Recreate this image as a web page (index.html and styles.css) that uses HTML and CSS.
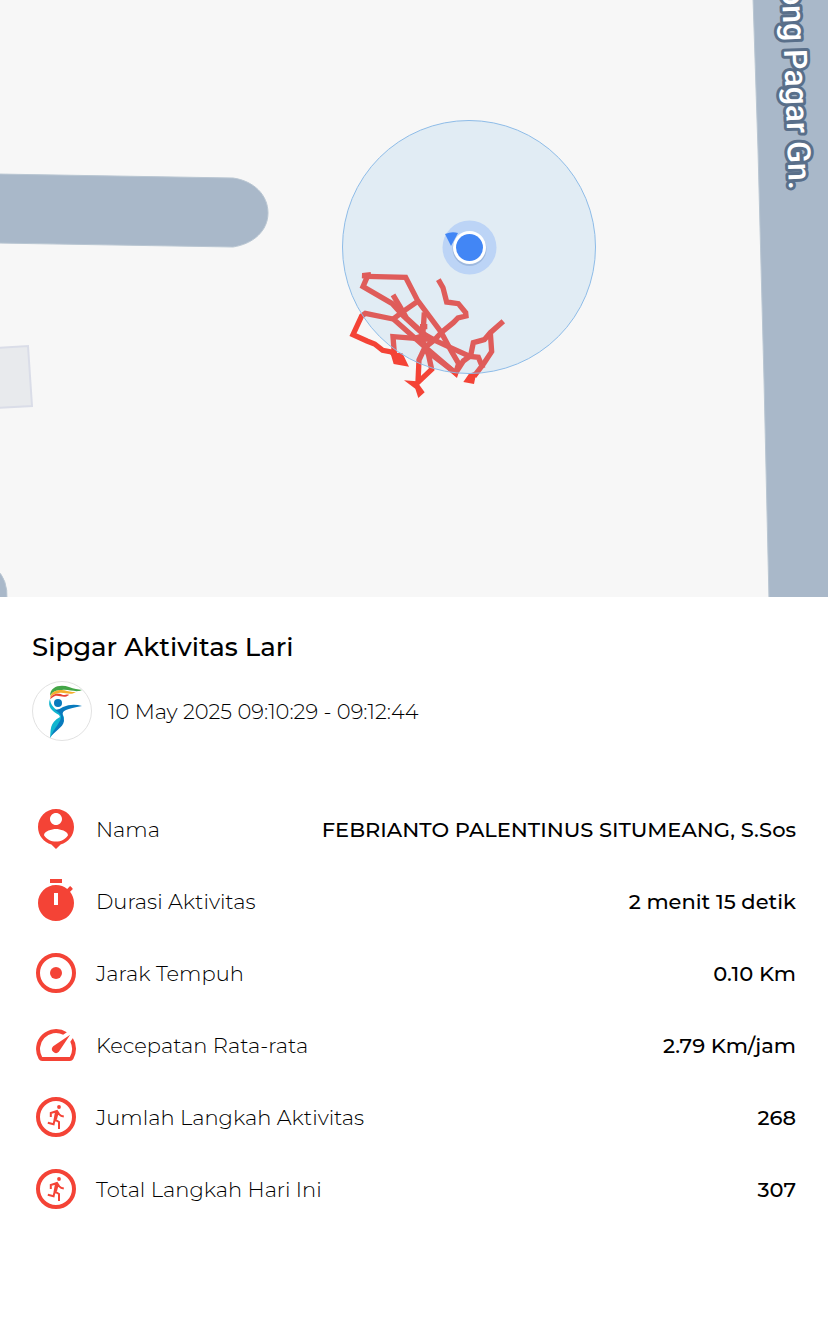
FILE: index.html
```html
<!DOCTYPE html>
<html lang="id">
<head>
<meta charset="utf-8">
<meta name="viewport" content="width=device-width, initial-scale=1">
<title>Sipgar Aktivitas Lari</title>
<link rel="stylesheet" href="styles.css">
</head>
<body>
<svg class="map" viewBox="0 0 828 597" role="img" aria-label="Peta rute lari">
  <g class="road">
    <path d="M-4 174L233 178C254 181 268 195 268 213C268 231 253 244 233 247L-4 243Z"/>
    <path d="M753 -2L758 150L764 380L769 600H832V-2Z"/>
    <path d="M-4 569Q8 579 7 600H-4Z"/>
  </g>
  <path class="building" d="M-4 348L28 346L32 406L-4 408Z"/>
  <text class="street" text-anchor="end" transform="translate(789 190) rotate(88)">ong Pagar Gn.</text>
  <g class="route" transform="translate(335 210) scale(.3333)">
    <path d="M108 194L82 197L97 200L84 230L172 281L205 318L262 370L300 391L345 412L405 439L430 442L444 475"/>
    <path d="M95 199L212 202L248 272L318 366L350 425L371 461L362 490L270 411L175 327L205 304L248 274"/>
    <path d="M174 255L195 290L215 325L270 375L240 385L174 380L178 430"/>
    <path d="M310 209L324 233L335 276L370 281L392 308L393 318L369 324L355 338L320 367L298 390L270 412L252 450L249 517L290 478L281 436L262 390L266 340L268 307"/>
    <path d="M174 327L91 310L80 318L54 374L96 393L119 402L143 421L169 426L202 450"/>
    <path d="M505 334L466 368L448 389L415 398L407 437L385 453L362 489L278 425"/>
    <path d="M466 368L470 425L447 460L417 499"/>
    <path d="M255 350H277M235 385L285 388"/>
    <path class="tip" d="M166 428L202 429L222 470L176 462ZM207 511L245 514L269 547L250 564L241 536ZM402 491L425 484L417 522L385 516Z"/>
  </g>
  <circle class="accuracy" cx="469" cy="247" r="126.500"/>
  <circle class="halo" cx="469.500" cy="247.500" r="27"/>
  <path class="position" d="M445 234Q452 231 458 233L451 246Z"/>
  <circle class="shade" cx="469.500" cy="249" r="17"/>
  <circle class="rim" cx="469.500" cy="247.500" r="16.500"/>
  <circle class="position" cx="469.500" cy="247.500" r="13.500"/>
</svg>

<main class="panel">
  <h1 class="title">Sipgar Aktivitas Lari</h1>
  <div class="session">
    <svg class="avatar" viewBox="0 0 60 60" role="img" aria-label="Sipgar">
      <circle cx="30" cy="30" r="29.500" fill="#fff" stroke="#e2e2e2"/>
      <path d="M18 15C18 5 29 3 37 6C42 8 46 8 50 9C44 12 37 8 30 9C24 9 20 11 18 15Z" fill="#43a547"/>
      <path d="M18 17C19 9 29 8 35 10C39 11 42 11 44 11C38 15 33 11 27 12C22 13 20 14 18 17Z" fill="#f5ae2b"/>
      <path d="M18 18C20 12 27 12 31 14C34 14 36 13 37 14C32 18 28 14 23 15C20 16 19 18 18 18Z" fill="#e94335"/>
      <path d="M18 18C15 26 20 30 27 34L28 36C17 42 19 49 18 57C22 49 32 44 32 37C32 30 19 30 18 18Z" fill="#10b5cf"/>
      <circle cx="26" cy="22" r="4" fill="#087abd"/>
      <path d="M23 29Q27 29 31 26Q40 22 50 25Q39 27 34 29C28 31 32 36 32 40C31 47 22 50 18 57C22 47 30 40 29 35Q28 32 23 29Z" fill="#087abd"/>
    </svg>
    <time class="when" datetime="2025-05-10T09:10:29">10 May 2025 09:10:29 - 09:12:44</time>
  </div>

  <dl class="stats">
    <div class="row">
      <dt class="label"><svg class="icon" viewBox="0 0 24 24" aria-hidden="true"><path d="M12 2c-4.970 0-9 4.030-9 9 0 4.170 2.840 7.670 6.690 8.690L12 22l2.310-2.310C18.160 18.670 21 15.170 21 11c0-4.970-4.030-9-9-9zm0 2c1.660 0 3 1.340 3 3s-1.340 3-3 3-3-1.340-3-3 1.340-3 3-3zm0 14.300c-2.500 0-4.710-1.280-6-3.220.030-1.990 4-3.080 6-3.080 1.990 0 5.970 1.090 6 3.080-1.290 1.940-3.500 3.220-6 3.220z"/></svg>Nama</dt>
      <dd class="value">FEBRIANTO PALENTINUS SITUMEANG, S.Sos</dd>
    </div>
    <div class="row">
      <dt class="label"><svg class="icon" viewBox="0 0 24 24" aria-hidden="true"><path d="M9 1h6v2H9zM19.030 7.390l1.420-1.420c-.43-.51-.9-.99-1.410-1.410l-1.420 1.420C16.070 4.740 14.120 4 12 4c-4.970 0-9 4.030-9 9s4.020 9 9 9 9-4.030 9-9c0-2.120-.74-4.070-1.970-5.610zM13 14h-2V8h2v6z"/></svg>Durasi Aktivitas</dt>
      <dd class="value">2 menit 15 detik</dd>
    </div>
    <div class="row">
      <dt class="label"><svg class="icon" viewBox="0 0 24 24" aria-hidden="true"><circle class="ring" cx="12" cy="12" r="9"/><circle cx="12" cy="12" r="3"/></svg>Jarak Tempuh</dt>
      <dd class="value">0.10 Km</dd>
    </div>
    <div class="row">
      <dt class="label"><svg class="icon" viewBox="0 0 24 24" aria-hidden="true"><path d="M20.380 8.570l-1.230 1.850a8 8 0 0 1-.22 7.580H5.070A8 8 0 0 1 15.580 6.850l1.850-1.230A10 10 0 0 0 3.350 19a2 2 0 0 0 1.720 1h13.850a2 2 0 0 0 1.740-1 10 10 0 0 0-.27-10.440zm-9.790 6.840a2 2 0 0 0 2.830 0l5.660-8.490-8.490 5.660a2 2 0 0 0 0 2.830z"/></svg>Kecepatan Rata-rata</dt>
      <dd class="value">2.79 Km/jam</dd>
    </div>
    <div class="row">
      <dt class="label"><svg class="icon" viewBox="0 0 24 24" aria-hidden="true"><circle class="ring" cx="12" cy="12" r="9"/><g id="runner"><circle cx="13.500" cy="7" r=".95"/><path class="limbs" d="M9.400 12V10L12.500 9L13.600 10.700Q14.500 11.600 15.900 11.800M12.100 9L11.300 13.200L13.500 14.500V18M12.900 9.600L12 13M11.400 12.800L10.800 15.600L7.900 14.900"/></g></svg>Jumlah Langkah Aktivitas</dt>
      <dd class="value">268</dd>
    </div>
    <div class="row">
      <dt class="label"><svg class="icon" viewBox="0 0 24 24" aria-hidden="true"><circle class="ring" cx="12" cy="12" r="9"/><use href="#runner"/></svg>Total Langkah Hari Ini</dt>
      <dd class="value">307</dd>
    </div>
  </dl>
</main>
</body>
</html>
```
FILE: styles.css
```css
* { box-sizing: border-box; }
body {
  margin: 0;
  background: #fff;
  color: #000;
  font-family: Montserrat, Inter, "Open Sans", sans-serif;
  font-size: 21px;
}
.map { display: block; width: 100%; height: auto; background: #f7f7f7; }
.road { fill: #a9b8c9; stroke: #b9c6d2; stroke-width: 1; }
.building { fill: #e8eaed; stroke: #dadde8; stroke-width: 2; }
.street {
  font-family: Roboto, sans-serif;
  font-size: 32px;
  font-weight: 500;
  fill: #fff;
  stroke: #596f8a;
  stroke-width: 6px;
  stroke-linejoin: round;
  paint-order: stroke;
}
.route { fill: none; stroke: #f44336; stroke-width: 16; stroke-linejoin: miter; }
.tip { fill: #f44336; stroke: none; }
.accuracy { fill: rgba(142, 197, 237, .2); stroke: #8ebce8; stroke-width: 1; }
.halo { fill: #bcd4f6; }
.shade { fill: #9fb9df; }
.rim { fill: #fff; }
.position { fill: #4286f5; }

.panel { padding: 32px; }
.title { margin: 0 0 16px; font-size: 26px; line-height: 36px; font-weight: 500; }
.session { display: flex; align-items: center; gap: 16px; font-weight: 300; }
.avatar { width: 60px; height: 60px; flex: none; }
.stats { display: flex; flex-direction: column; gap: 24px; margin: 64px 0 0; }
.row { display: flex; align-items: center; justify-content: space-between; gap: 16px; }
.label { display: flex; align-items: center; gap: 16px; font-weight: 300; }
.icon { width: 48px; height: 48px; flex: none; fill: #f44336; }
.ring { fill: none; stroke: #f44336; stroke-width: 2; }
.limbs { fill: none; stroke: #f44336; stroke-width: 1; }
.value { margin: 0; font-weight: 500; text-align: right; }
```
